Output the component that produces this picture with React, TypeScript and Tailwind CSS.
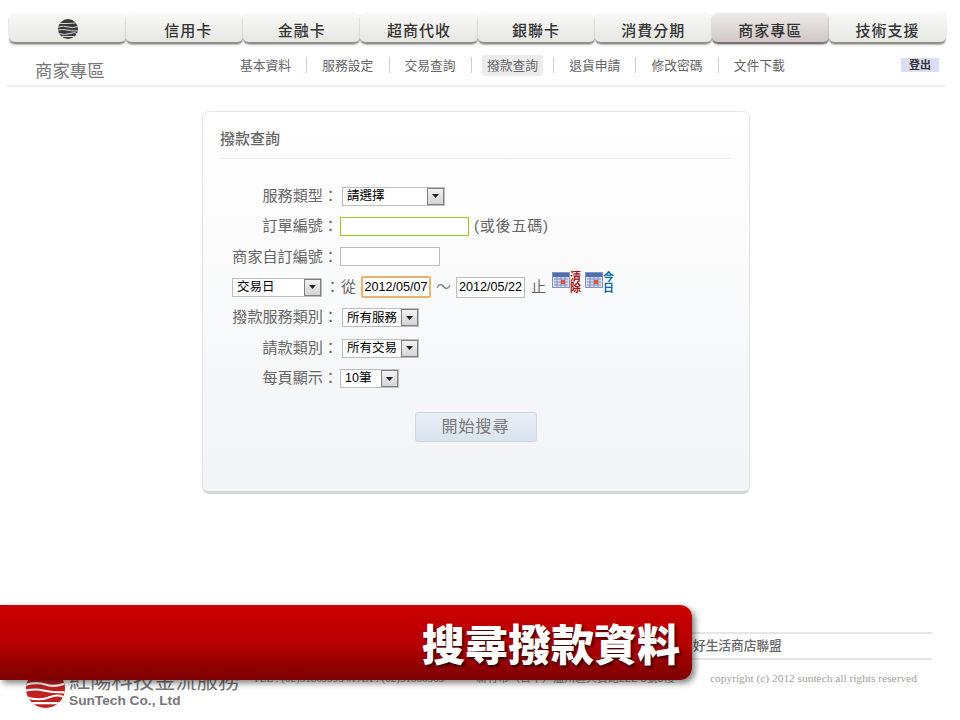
const sans = 'font-["Liberation_Sans","Noto_Sans_CJK_TC",sans-serif]';

const tabs = ["", "信用卡", "金融卡", "超商代收", "銀聯卡", "消費分期", "商家專區", "技術支援"];
const subs = ["基本資料", "服務設定", "交易查詢", "撥款查詢", "退貨申請", "修改密碼", "文件下載"];

function Logo({ size, color, stroke }: { size: number; color: string; stroke: number }) {
  return (
    <svg width={size} height={size} viewBox="0 0 40 40">
      <defs>
        <clipPath id={`c${size}`}>
          <circle cx="20" cy="20" r="20" />
        </clipPath>
      </defs>
      <g clipPath={`url(#c${size})`}>
        <rect width="40" height="40" fill={color} />
        <path d="M0 9 H18 Q30 9 40 7 M0 16 Q12 13 20 16 T40 15 M0 22 Q10 20 18 22 T40 24 M0 29 Q14 33 24 29 T40 30 M0 35 H40" stroke="#fff" strokeWidth={stroke} fill="none" />
      </g>
    </svg>
  );
}

function Select({ label, width, ml = "" }: { label: string; width: string; ml?: string }) {
  return (
    <div className={`${width} ${ml} h-[19px] flex items-center justify-between border border-[#bcbcc4] bg-white pl-[4px] shrink-0`}>
      <span className="text-[12.5px] leading-none text-black whitespace-nowrap">{label}</span>
      <span className="w-[17px] h-[17px] shrink-0 flex items-center justify-center border border-[#808080] bg-gradient-to-b from-[#f2f2f2] to-[#d4d4d4]">
        <svg width="7" height="4" viewBox="0 0 7 4"><path d="M0 0H7L3.5 4Z" fill="#222" /></svg>
      </span>
    </div>
  );
}

function Row({ label, children }: { label?: string; children: React.ReactNode }) {
  return (
    <div className="flex items-center h-[30.4px]">
      {label && <div className="w-[118px] text-right text-[15.1px] text-[#666] whitespace-nowrap shrink-0">{label}：</div>}
      {children}
    </div>
  );
}

function CalendarIcon({ top, bottom, color }: { top: string; bottom: string; color: string }) {
  return (
    <span className="flex items-start">
      <svg width="18" height="17" viewBox="0 0 18 17">
        <rect x="0.5" y="0.5" width="17" height="15" fill="#d9def0" stroke="#8a93b5" />
        <rect x="1" y="1" width="16" height="4" fill="#4a6fb5" />
        <path d="M2 7H16M2 10H16M2 13H16M5 5V15M9 5V15M13 5V15" stroke="#7f8fc4" strokeWidth="1" />
        <rect x="9" y="8" width="4" height="4" fill="#e0503a" />
      </svg>
      <span className="flex flex-col text-[11px] leading-[11px] font-bold" style={{ color }}>
        <span>{top}</span>
        <span>{bottom}</span>
      </span>
    </span>
  );
}

export default function App() {
  return (
    <div className={`relative w-[960px] h-[720px] overflow-hidden bg-white ${sans}`}>
      {/* main tabs */}
      <nav className="grid grid-cols-8 ml-[9px] pt-[13px] w-[937px]">
        {tabs.map((t, i) => (
          <div
            key={i}
            className={`h-[31px] flex items-center justify-center rounded-[6px] border-b-2 text-[15px] tracking-[1px] text-[#333] font-medium shadow-[0_1px_2px_rgba(0,0,0,0.3)] ${
              i === 0 ? "pt-[2px]" : "pt-[7px]"
            } ${
              i === 6
                ? "bg-gradient-to-b from-[#efebe9] to-[#cec7c5] border-[#77716f]"
                : "bg-gradient-to-b from-[#f9f9f7] to-[#e6e6e2] border-[#8f8f88]"
            }`}
          >
            {i === 0 ? <Logo size={20} color="#3a3a3a" stroke={1.6} /> : <span className={i === 1 ? "ml-[7px]" : ""}>{t}</span>}
          </div>
        ))}
      </nav>

      {/* sub navigation */}
      <div className="flex items-start h-[41px] pl-[35px] pr-[21px]">
        <div className="w-[190px] pt-[15px] text-[17.4px] leading-[24px] text-[#777] whitespace-nowrap">商家專區</div>
        <div className="flex mt-[11px]">
          {subs.map((s, i) => (
            <div key={s} className="relative w-[82.3px] h-[20px] flex items-center">
              <span className={`text-[12.75px] leading-[20px] pt-[1px] text-[#666] whitespace-nowrap ${i === 3 ? "ml-[10px] bg-[#ececec] rounded-[3px] px-[5px]" : "ml-[15px]"}`}>
                {s}
              </span>
              {i < 6 && <span className="absolute right-0 top-[2px] h-[16px] w-px bg-[#cfcfcf]" />}
            </div>
          ))}
        </div>
        <div className="ml-auto mt-[14px] w-[38px] h-[14px] bg-[#dcdcf6] flex items-center justify-center text-[11px] font-bold text-[#333]">登出</div>
      </div>
      <div className="ml-[7px] w-[938px] h-[2px] bg-[#efefef]" />

      {/* card */}
      <div className="ml-[202px] mt-[24px] w-[548px] h-[383px] rounded-[7px] border border-[#e6e6e6] border-b-[3px] border-b-[#d6d8d8] bg-gradient-to-b from-white to-[#f3f4f6] px-[17px]">
        <div className="h-[47px] flex items-end border-b border-[#e8e8e8] pb-[9px] mr-[1px] text-[15px] leading-[20px] font-medium text-[#666]">撥款查詢</div>
        <div className="mt-[22px]">
          <Row label="服務類型">
            <Select label="請選擇" width="w-[103px]" ml="ml-[4px]" />
          </Row>
          <Row label="訂單編號">
            <div className="ml-[2px] w-[129px] h-[19px] border border-[#9acb1a] bg-white" />
            <span className="ml-[5px] text-[15px] tracking-[0.8px] text-[#666]">(或後五碼)</span>
          </Row>
          <Row label="商家自訂編號">
            <div className="ml-[2px] w-[100px] h-[19px] border border-[#bdbdbd] bg-white" />
          </Row>
          <Row>
            <Select label="交易日" width="w-[90px]" ml="ml-[12px]" />
            <span className="ml-[2px] w-[17px] text-[15px] text-[#666] text-center">：</span>
            <span className="text-[15px] text-[#666]">從</span>
            <div className="ml-[5px] w-[70px] h-[22px] border-2 border-[#e6b56a] rounded-[2px] bg-white flex items-center justify-center text-[12.6px] text-black">2012/05/07</div>
            <span className="w-[25px] text-center text-[15px] text-[#888]">～</span>
            <div className="w-[69px] h-[21px] border border-[#bdbdbd] bg-white flex items-center justify-center text-[12.6px] text-black">2012/05/22</div>
            <span className="ml-[6px] text-[15px] text-[#666]">止</span>
            <div className="ml-[6px] flex gap-[4px] -mt-[9px]">
              <CalendarIcon top="清" bottom="除" color="#a11414" />
              <CalendarIcon top="今" bottom="日" color="#0a6aa8" />
            </div>
          </Row>
          <Row label="撥款服務類別">
            <Select label="所有服務" width="w-[77px]" ml="ml-[4px]" />
          </Row>
          <Row label="請款類別">
            <Select label="所有交易" width="w-[77px]" ml="ml-[4px]" />
          </Row>
          <Row label="每頁顯示">
            <Select label="10筆" width="w-[59px]" ml="ml-[2px]" />
          </Row>
        </div>
        <div className="flex justify-center mt-[18px] mr-[1px]">
          <button className="w-[122px] h-[30px] rounded-[3px] border border-[#cfd6e0] bg-gradient-to-b from-[#e9eff6] to-[#d9e3ef] text-[16px] tracking-[1px] text-[#777]">開始搜尋</button>
        </div>
      </div>

      {/* footer */}
      <footer className="ml-[26px] mt-[138px] w-[906px]">
        <div className="h-[28px] pt-[1px] border-t-2 border-b-2 border-[#e6e6e6] flex items-center pl-[667px] text-[12.7px] font-medium text-[#666] whitespace-nowrap">好生活商店聯盟</div>
        <div className="flex items-start">
          <div className="mt-[9px] shrink-0"><Logo size={39} color="#c02020" stroke={2.2} /></div>
          <div className="ml-[4px] w-[170px] shrink-0 mt-[8px]">
            <div className="text-[21.3px] leading-[26px] text-[#777] whitespace-nowrap">紅陽科技金流服務</div>
            <div className="text-[13.7px] leading-[14px] font-bold text-[#777] whitespace-nowrap">SunTech Co., Ltd</div>
          </div>
          <div className="ml-[14px] w-[223px] shrink-0 mt-[10px] font-['Liberation_Serif','Noto_Sans_CJK_TC',serif] text-[11px] text-[#888] whitespace-nowrap">TEL : (02)51869995 #FAX : (02)51866565</div>
          <div className="w-[234px] shrink-0 mt-[10px] text-[11px] text-[#888] whitespace-nowrap">新竹市（台中）溫州區興賓路222 5號3樓</div>
          <div className="mt-[10px] font-['Liberation_Serif',serif] text-[11.4px] text-[#a0a0a0] whitespace-nowrap">copyright (c) 2012 suntech all rights reserved</div>
        </div>
      </footer>

      {/* caption banner */}
      <div className="absolute left-0 top-[605px] w-[692px] h-[75px] rounded-r-[12px] bg-gradient-to-b from-[#cc0000] via-[#b80000] to-[#7c0000] shadow-[3px_3px_6px_rgba(0,0,0,0.5)] flex items-center justify-end pr-[12px]">
        <span className="text-[43px] leading-none font-black text-white whitespace-nowrap [text-shadow:2px_2px_3px_rgba(0,0,0,0.7)] font-['Noto_Sans_CJK_TC',sans-serif]">搜尋撥款資料</span>
      </div>
    </div>
  );
}
